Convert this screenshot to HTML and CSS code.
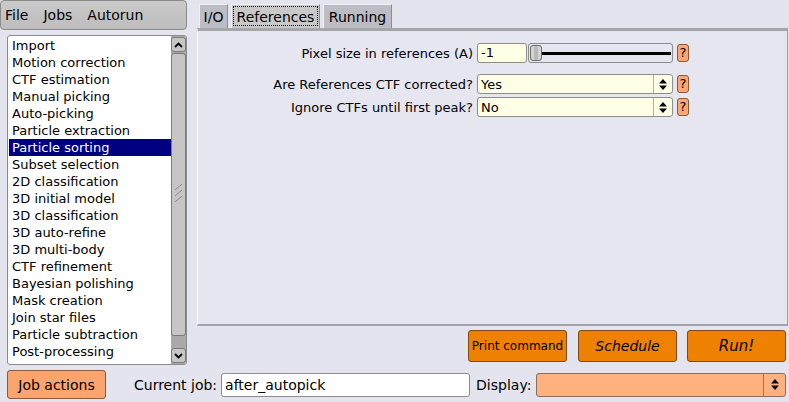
FILE: index.html
```html
<!DOCTYPE html>
<html lang="en">
<head>
    <meta charset="UTF-8">
    <title>RELION</title>
    <link rel="stylesheet" href="styles.css">
</head>
<body>
<div class="window">
    <div class="top">
        <!-- left column: menu + job types -->
        <div class="left">
            <div class="menubar">
                <span>File</span>
                <span>Jobs</span>
                <span>Autorun</span>
            </div>
            <div class="joblist">
                <ul class="items">
                    <li>Import</li>
                    <li>Motion correction</li>
                    <li>CTF estimation</li>
                    <li>Manual picking</li>
                    <li>Auto-picking</li>
                    <li>Particle extraction</li>
                    <li class="selected">Particle sorting</li>
                    <li>Subset selection</li>
                    <li>2D classification</li>
                    <li>3D initial model</li>
                    <li>3D classification</li>
                    <li>3D auto-refine</li>
                    <li>3D multi-body</li>
                    <li>CTF refinement</li>
                    <li>Bayesian polishing</li>
                    <li>Mask creation</li>
                    <li>Join star files</li>
                    <li>Particle subtraction</li>
                    <li>Post-processing</li>
                </ul>
                <div class="scrollbar">
                    <div class="sb-btn">
                        <svg width="9" height="6" viewBox="0 0 9 6"><path d="M1 5 L4.5 1.5 L8 5" fill="none" stroke="#000" stroke-width="1.8"/></svg>
                    </div>
                    <div class="sb-thumb">
                        <svg width="9" height="18" viewBox="0 0 9 18"><path d="M1 6 L8 0 M1 12 L8 6 M1 18 L8 12" stroke="#8c8c8c" stroke-width="1"/></svg>
                    </div>
                    <div class="sb-track"></div>
                    <div class="sb-btn">
                        <svg width="9" height="6" viewBox="0 0 9 6"><path d="M1 1 L4.5 4.5 L8 1" fill="none" stroke="#000" stroke-width="1.8"/></svg>
                    </div>
                </div>
            </div>
        </div>

        <!-- right column: tabs + parameters -->
        <div class="right">
            <div class="tabs">
                <div class="tab io">I/O</div>
                <div class="tab refs active">References</div>
                <div class="tab running">Running</div>
            </div>
            <div class="panel">
                <div class="row first">
                    <label class="lbl">Pixel size in references (A)</label>
                    <div class="ctl">
                        <div class="field num">-1</div>
                        <div class="slider">
                            <div class="knob"></div>
                            <div class="line"></div>
                        </div>
                    </div>
                    <div class="help">?</div>
                </div>
                <div class="row second">
                    <label class="lbl">Are References CTF corrected?</label>
                    <div class="ctl choice">
                        <span class="val">Yes</span>
                        <span class="arrows">
                            <svg width="8" height="11" viewBox="0 0 8 11"><path d="M0 4.5 L4 0 L8 4.5 Z M0 6.5 L4 11 L8 6.5 Z" fill="#000"/></svg>
                        </span>
                    </div>
                    <div class="help">?</div>
                </div>
                <div class="row">
                    <label class="lbl">Ignore CTFs until first peak?</label>
                    <div class="ctl choice">
                        <span class="val">No</span>
                        <span class="arrows">
                            <svg width="8" height="11" viewBox="0 0 8 11"><path d="M0 4.5 L4 0 L8 4.5 Z M0 6.5 L4 11 L8 6.5 Z" fill="#000"/></svg>
                        </span>
                    </div>
                    <div class="help">?</div>
                </div>
            </div>
            <div class="actions">
                <button class="run small">Print command</button>
                <button class="run italic">Schedule</button>
                <button class="run italic big">Run!</button>
            </div>
        </div>
    </div>

    <!-- bottom bar -->
    <div class="bottom">
        <button class="jobactions">Job actions</button>
        <span class="blabel cur">Current job:</span>
        <div class="curjob">after_autopick</div>
        <span class="blabel">Display:</span>
        <div class="display">
            <span class="arrows">
                <svg width="8" height="11" viewBox="0 0 8 11"><path d="M0 4.5 L4 0 L8 4.5 Z M0 6.5 L4 11 L8 6.5 Z" fill="#000"/></svg>
            </span>
        </div>
    </div>
</div>
</body>
</html>
```

FILE: styles.css
```css
/* base */
body {
    margin: 0;
    background: #e4e4ee;
    font-family: "DejaVu Sans", sans-serif;
    color: #000;
}

.window {
    width: 789px;
    height: 402px;
    overflow: hidden;
    display: flex;
    flex-direction: column;
}

.top {
    display: flex;
    height: 366px;
}

/* left column */
.left {
    width: 187px;
    display: flex;
    flex-direction: column;
}

.menubar {
    height: 30px;
    box-sizing: border-box;
    background: linear-gradient(#cacaca, #bdbdbd);
    border: 1px solid #8a8a8a;
    border-radius: 4px;
    display: flex;
    align-items: center;
    font-size: 14px;
    padding: 0 0 1px 4px;
}

.menubar span {
    margin-right: 15px;
}

.joblist {
    margin: 5px 0 0 7px;
    width: 180px;
    height: 330px;
    box-sizing: border-box;
    background: #fff;
    border: 1px solid #8c8c8c;
    border-radius: 3px;
    display: flex;
    overflow: hidden;
}

.items {
    list-style: none;
    margin: 0;
    padding: 1px 0 0 1px;
    flex: 1;
    font-size: 13px;
}

.items li {
    height: 17px;
    line-height: 17px;
    padding-left: 3px;
    white-space: nowrap;
}

.items li.selected {
    background: #000080;
    color: #fff;
}

.scrollbar {
    width: 15px;
    display: flex;
    flex-direction: column;
    background: #a9a9a9;
    padding: 1px 0;
    box-sizing: border-box;
}

.sb-btn {
    height: 15px;
    box-sizing: border-box;
    background: #c6c6c6;
    border: 1px solid #7a7a7a;
    border-radius: 3px;
    display: flex;
    align-items: center;
    justify-content: center;
}

.sb-thumb {
    height: 283px;
    box-sizing: border-box;
    background: #c6c6c6;
    border: 1px solid #7a7a7a;
    border-radius: 3px;
    margin-top: 1px;
    display: flex;
    align-items: center;
    justify-content: center;
    padding-bottom: 4px;
}

.sb-track {
    flex: 1;
}

/* right column */
.right {
    margin-left: 10px;
    width: 591px;
    display: flex;
    flex-direction: column;
}

.tabs {
    display: flex;
    gap: 3px;
    padding: 4px 0 0 2px;
    height: 24px;
}

.tab {
    height: 24px;
    box-sizing: border-box;
    background: #bcbcc4;
    border: 1px solid #8c8c94;
    border-bottom: none;
    border-top-color: #f0f0f4;
    border-left-color: #f0f0f4;
    font-size: 14px;
    line-height: 24px;
    text-align: center;
}

.tab.io {
    width: 29px;
}

.tab.refs {
    width: 89px;
}

.tab.running {
    width: 69px;
}

.tab.active {
    background: #c9c9c9;
    outline: 1px dotted #000;
    outline-offset: -3px;
}

.panel {
    height: 298px;
    box-sizing: border-box;
    background: #e6e6f0;
    border-top: 3px solid #a6a6aa;
    border-right: 1px solid #9a9aa2;
    border-bottom: 2px solid #a2a2aa;
    border-left: 1px solid #fafaff;
    font-size: 13px;
}

.row {
    display: flex;
    align-items: center;
    height: 20px;
    margin-top: 3px;
}

.row.first {
    margin-top: 12px;
}

.row.second {
    margin-top: 11px;
}

.lbl {
    width: 275px;
    text-align: right;
    padding-right: 4px;
}

.ctl {
    width: 196px;
    height: 20px;
    display: flex;
    box-sizing: border-box;
}

.field {
    background: #ffffe6;
    border: 1px solid #8c8c8c;
    border-radius: 3px;
    box-sizing: border-box;
    height: 20px;
    line-height: 18px;
    padding-left: 3px;
}

.field.num {
    width: 50px;
}

.slider {
    flex: 1;
    margin-left: 1px;
    height: 20px;
    box-sizing: border-box;
    border: 1px solid #8c8c8c;
    border-radius: 3px;
    display: flex;
    align-items: center;
    padding: 0 1px;
}

.knob {
    width: 12px;
    height: 16px;
    box-sizing: border-box;
    background: #b8b8b8;
    border: 1px solid #6c6c6c;
    border-radius: 3px;
    box-shadow: inset 3px 0 0 #d4d4d4, inset -3px 0 0 #d4d4d4;
}

.line {
    flex: 1;
    height: 3px;
    background: #000;
}

.choice {
    background: #ffffe6;
    border: 1px solid #8c8c8c;
    border-radius: 3px;
    align-items: center;
    justify-content: space-between;
    padding-left: 3px;
}

.arrows {
    display: flex;
    align-items: center;
    justify-content: center;
    width: 18px;
    height: 100%;
    border-left: 1px solid #b0b0b0;
}

.help {
    margin-left: 4px;
    width: 12px;
    height: 18px;
    box-sizing: border-box;
    background: #f9a774;
    border: 1px solid #8a5a3a;
    border-radius: 3px;
    font-size: 13px;
    line-height: 16px;
    text-align: center;
}

/* run buttons */
.actions {
    display: flex;
    justify-content: flex-end;
    gap: 10px;
    margin-top: 4px;
    padding-right: 2px;
}

button {
    font-family: "DejaVu Sans", sans-serif;
    color: #000;
    cursor: pointer;
}

.run {
    width: 99px;
    height: 32px;
    background: #ee8200;
    border: 1px solid #7a4a1a;
    border-radius: 3px;
    font-size: 14px;
    padding: 0;
}

.run.small {
    font-size: 12px;
    margin-right: 1px;
}

.run.italic {
    font-style: italic;
}

.run.big {
    font-size: 15px;
}

/* bottom bar */
.bottom {
    display: flex;
    align-items: center;
    margin-top: 4px;
    height: 29px;
    font-size: 14px;
}

.jobactions {
    margin-left: 7px;
    width: 99px;
    height: 29px;
    background: #fba46e;
    border: 1px solid #8a5a3a;
    border-radius: 3px;
    font-size: 14px;
    padding: 0;
}

.blabel {
    padding-right: 4px;
}

.blabel.cur {
    margin-left: 28px;
}

.curjob {
    width: 249px;
    height: 24px;
    box-sizing: border-box;
    background: #fff;
    border: 1px solid #8c8c8c;
    border-radius: 3px;
    line-height: 22px;
    padding-left: 3px;
    margin-right: 6px;
}

.display {
    margin-left: 1px;
    width: 250px;
    height: 24px;
    box-sizing: border-box;
    background: #ffb27f;
    border: 1px solid #8c6c5c;
    border-radius: 3px;
    display: flex;
    justify-content: flex-end;
}

.display .arrows {
    width: 21px;
    border-left-color: #b07050;
}
```
